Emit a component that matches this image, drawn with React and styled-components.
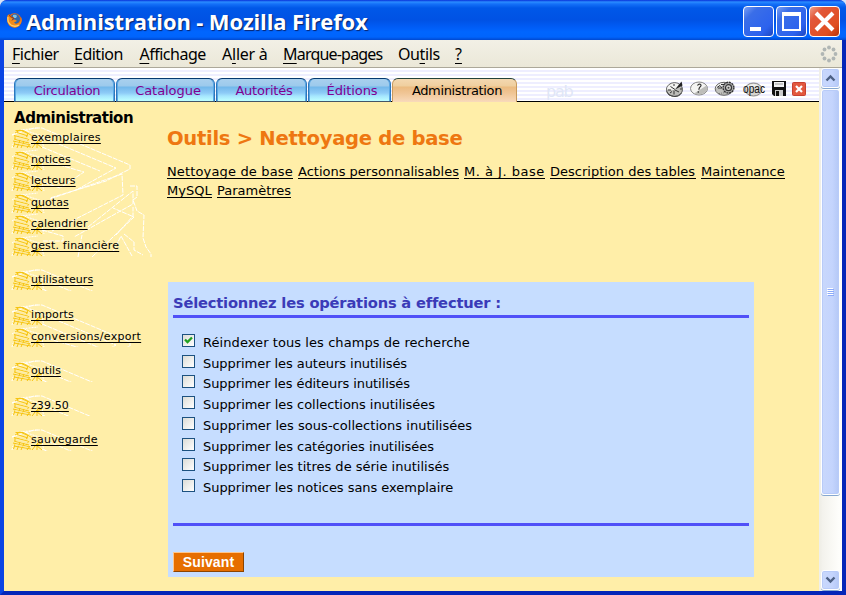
import React from "react";
import styled, { createGlobalStyle, css } from "styled-components";

const Global = createGlobalStyle`
  * { box-sizing: border-box; }
  body { margin: 0; overflow: hidden; background: #d8e4f8; }
`;

const verdana = `Verdana, "DejaVu Sans", sans-serif`;

const Window = styled.div`
  width: 846px;
  height: 595px;
  display: flex;
  flex-direction: column;
  overflow: hidden;
  background: #0a3ed8;
  border-radius: 7px 7px 0 0;
  font-family: ${verdana};
  color: #000;
`;

const TitleBar = styled.header`
  height: 40px;
  flex: none;
  display: flex;
  align-items: center;
  padding: 3px 6px 0 6px;
  border-radius: 7px 7px 0 0;
  background: linear-gradient(#0831d9 0, #2a8cff 2px, #1470f8 4px, #0058e8 8px, #0052e4 20px, #005cf6 27px, #0066ff 32px, #0064fc 37px, #0048d0 40px);
  > svg { margin-top: -3px; }
`;

const Title = styled.h1`
  flex: 1;
  margin: -1px 0 0 3px;
  font: bold 22px/30px "Trebuchet MS", "Open Sans", sans-serif;
  letter-spacing: -0.14px;
  color: #fff;
  white-space: nowrap;
  text-shadow: 1px 1px 1px #0a246a;
`;

const Controls = styled.div`
  display: flex;
  gap: 2px;
`;

const Control = styled.button`
  width: 31px;
  height: 31px;
  padding: 0;
  border: 1px solid #fff;
  border-radius: 4px;
  background: ${(p) =>
    p.$close
      ? "linear-gradient(135deg, #f0a08a 0, #e2583a 25%, #e04e20 75%, #b83208 100%)"
      : "linear-gradient(135deg, #7a9ff4 0, #3a6ee8 25%, #2c62ee 75%, #1c46c0 100%)"};
  svg { display: block; }
`;

const Frame = styled.div`
  flex: 1;
  min-height: 0;
  display: flex;
  flex-direction: column;
  border: solid #0a3ae0;
  border-width: 0 4px 4px;
  border-color: #0a3ae0 #0526b8 #0526b8 #0a44e4;
  background: #fff;
`;

const MenuBar = styled.nav`
  height: 28px;
  flex: none;
  display: flex;
  align-items: center;
  padding: 0 4px 0 8px;
  background: linear-gradient(#f2f0e6, #ebe8d8);
  border-bottom: 1px solid #aca899;
  font: 16px/26px Tahoma, "Noto Sans", sans-serif;
`;

const MenuItem = styled.span`
  width: ${(p) => p.$w}px;
  white-space: nowrap;
  letter-spacing: ${(p) => p.$ls}px;
  u { text-underline-offset: 3px; text-decoration-thickness: 1px; }
`;

const Spacer = styled.span`
  flex: 1;
`;

const Body = styled.div`
  flex: 1;
  min-height: 0;
  display: flex;
`;

const Page = styled.div`
  width: 815px;
  background: #ffeea8;
`;

const Header = styled.div`
  height: 34px;
  display: flex;
  align-items: flex-end;
  border-bottom: 1px solid #000;
  background: repeating-linear-gradient(#fff 0, #fff 2px, #eeeeff 2px, #eeeeff 4px);
`;

const Tabs = styled.div`
  display: flex;
  margin: 0 0 -1px 10px;
`;

const Tab = styled.a`
  width: ${(p) => p.$w}px;
  height: 24px;
  margin-right: 1px;
  padding-left: 5px;
  border-radius: 6px 6px 0 0;
  text-align: center;
  font-size: 13px;
  line-height: 23px;
  letter-spacing: ${(p) => p.$ls}px;
  white-space: nowrap;
  ${(p) =>
    p.$active
      ? css`
          color: #000;
          border: 1px solid #c89a5c;
          border-top-color: #24433c;
          border-bottom: 0;
          background: linear-gradient(#f4d8b0 0, #efcf9f 7px, #ebbb80 8px, #f0c595 14px, #f8dabb 23px);
        `
      : css`
          color: #800090;
          border: 1px solid #2c78bc;
          border-top-color: #063a70;
          border-bottom: 1px solid #456;
          box-shadow: inset 1px 0 #5ba8e4, inset -1px 0 #5ba8e4;
          background: linear-gradient(#a9d0ee 0, #9ccaec 7px, #72b7ea 8px, #8ecbf7 14px, #a5e6fe 17px, #beffff 22px);
        `}
`;

const Watermark = styled.span`
  flex: 1;
  padding-left: 28px;
  font: 16px/18px ${verdana};
  letter-spacing: -1.2px;
  color: #e0e6f6;
`;

const Tools = styled.div`
  display: flex;
  align-items: center;
  height: 25px;
  padding-right: 13px;
  svg { display: block; }
`;

const Columns = styled.div`
  display: flex;
`;

const Sidebar = styled.aside`
  width: 164px;
  padding: 7px 0 0 8px;
  flex: none;
`;

const SideTitle = styled.h2`
  margin: 0 0 1px 2px;
  font-size: 15px;
  line-height: 18px;
  letter-spacing: -0.48px;
`;

const Group = styled.ul`
  position: relative;
  width: 148px;
  margin: 0 0 12.9px;
  padding: 0;
  list-style: none;
`;

const Lines = styled.svg`
  position: absolute;
  left: 0;
  top: -1px;
  width: 100%;
  height: 100%;
  overflow: hidden;
`;

const SideItem = styled.li`
  position: relative;
  height: 21.6px;
  display: flex;
  svg { flex: none; width: 19px; height: 22px; margin-top: -1px; overflow: visible; }
`;

const SideLink = styled.a`
  font-size: 11px;
  line-height: 20px;
  letter-spacing: ${(p) => p.$ls}px;
  white-space: nowrap;
  text-decoration: underline;
  text-decoration-skip-ink: none;
  text-underline-offset: 2px;
  text-decoration-thickness: 1px;
`;

const Main = styled.main`
  width: 640px;
  padding: 25px 0 0 0;
  margin-left: -1px;
`;

const Heading = styled.h2`
  margin: 0 0 12px;
  font-size: 19.6px;
  line-height: 24px;
  letter-spacing: -0.31px;
  color: #ee7711;
  white-space: nowrap;
`;

const LinkRow = styled.div`
  display: flex;
  height: 19px;
  gap: 5px;
  font-size: 13px;
  line-height: 18px;
`;

const TopLink = styled.a`
  width: ${(p) => p.$w}px;
  height: 16px;
  border-bottom: 1px solid #000;
  letter-spacing: ${(p) => p.$ls}px;
  white-space: nowrap;
`;

const Panel = styled.section`
  width: 586px;
  height: 295px;
  margin: 81px 0 0 1px;
  padding: 10px 5px 0;
  background: #c6ddff;
`;

const PanelTitle = styled.h3`
  margin: 0;
  height: 26px;
  border-bottom: 3px solid #5050f8;
  font-size: 14.7px;
  line-height: 22px;
  letter-spacing: -0.2px;
  color: #3b3bb8;
  white-space: nowrap;
`;

const Options = styled.div`
  height: 208px;
  padding: 14px 0 0 9px;
  border-bottom: 3px solid #5050f8;
`;

const Option = styled.label`
  display: flex;
  height: 20.72px;
  font-size: 13px;
  line-height: 21px;
  letter-spacing: ${(p) => p.$ls}px;
  white-space: nowrap;
`;

const Box = styled.span`
  width: 13px;
  height: 13px;
  margin: 2px 8px 0 0;
  border: 1px solid #1c5180;
  background: linear-gradient(135deg, #dcdcd7, #fff);
  svg { display: block; }
`;

const Submit = styled.button`
  display: block;
  width: 71px;
  height: 20px;
  margin: 26px 0 0 0;
  padding: 0;
  border: 1px solid;
  border-color: #ffc68c #8c4400 #8c4400 #ffc68c;
  background: #e66e00;
  color: #fff;
  font: bold 14px/18px Arial, "Liberation Sans", sans-serif;
  letter-spacing: 0.15px;
`;

const Scrollbar = styled.div`
  width: 23px;
  display: flex;
  flex-direction: column;
  padding: 0 2px 1px 2px;
  background: linear-gradient(90deg, #f0efe8 2px, #f3f2ec 3px, #fefefb 20px);
`;

const ScrollPart = styled.div`
  width: 19px;
  height: ${(p) => p.$h}px;
  display: flex;
  align-items: center;
  justify-content: center;
  border: 1px solid #fff;
  border-radius: 3px;
  background: linear-gradient(90deg, #c9d8fc, #c4d4fd 60%, #b4c8f6);
  box-shadow: inset 0 0 0 1px #b8cbf8, 0 1px 0 #86a8d0;
`;

const ScrollGap = styled.div`
  height: 1px;
`;

const Track = styled.div`
  flex: 1;
`;

const Firefox = () => (
  <svg width="17" height="17" viewBox="0 0 17 17">
    <circle cx="8.5" cy="8.5" r="7.2" fill="#e76b12" />
    <circle cx="9" cy="7" r="5" fill="#2c67b0" />
    <path d="M7 3q3-1 4 1l-1 2-3 0z" fill="#7cc4e8" />
    <path d="M1.5 3.5Q0 9 3 13q5 4.500 10 1 4-4 2-9 .5 4-2 6-3 2-5-.5l3-1.500-2-1.500-3 .2L7 5 4 4.500 3.500 2z" fill="#f08a1c" />
    <path d="M2 5q-1 5 3 8 4 2.500 8 0" fill="none" stroke="#fcd070" strokeWidth="1.300" />
    <path d="M3 2.500l1.500 2.500L8 6 6 8.500" fill="none" stroke="#a83c08" />
  </svg>
);

const Throbber = () => (
  <svg width="18" height="18" viewBox="0 0 18 18" fill="#b0b6b4">
    {[[9, 2.5], [13.5, 4.5], [15.5, 9], [13.5, 13.5], [9, 15.5], [4.5, 13.5], [2.5, 9], [4.5, 4.5]].map(([x, y]) => (
      <circle key={`${x}-${y}`} cx={x} cy={y} r="1.900" />
    ))}
  </svg>
);

const Books = () => (
  <svg viewBox="0 0 19 22" fill="none">
    <path d="M0 8L8 3 26 1M0 21l1-4M12 3l18 6M30 14l2 7" stroke="#fff" strokeDasharray="2 1" />
    <path d="M3.500 3.500h8l8 5M3 6l5-3 8 3.500M5 5.500l11 3.500M2 8.500L16 12M2 12l15 4M3 9v3M1 14l17 4M2 17l17 3M1.500 20l2-6M8 13l-3 8M12 14l-3 7M20 21l4-5 6-2M22 18l6-6M25 15v6M24 16l6 5M16 6l-2 5M17 12l-3 4M18 17l-3 4" stroke="#f6c412" />
    <path d="M5 8l11 3M4 11.500l12 3M3 15.500l13 3" stroke="#fbe9a0" strokeWidth="1.200" />
  </svg>
);

const Building = () => (
  <Lines fill="none" stroke="#fff" strokeWidth="1" strokeDasharray="5 1">
    <path d="M0 8L22 1 30 1 118 38 118 42 94 54 38 71M30 10L104 41 66 62M30 20L88 44M30 33L72 45 48 61 30 55M38 72L110 47 111 68 40 104M76 100L121 64 121 77 62 110M66 130l4-22M80 130L122 90 101 81M104 108l17-19v-9M30 103l21 6v5H30M118 59h7v11l-4 3 4 11 7 4-1 23 3 9 5 7v7M112 107l10 8v8l9 5M101 125l8-16 11 20" />
  </Lines>
);

const Clock = () => (
  <svg width="20" height="19" viewBox="0 0 20 19">
    <ellipse cx="9.500" cy="10.500" rx="8" ry="6.800" fill="#bcbcb8" stroke="#555" />
    <path d="M2 10.500a7.500 6 0 0 1 12-5l-4 5.500z" fill="#f2f2f0" />
    <path d="M10 10.500l6.500-8 1 4z" fill="#222" />
    <path d="M10 10.500L5.500 7.500M10 11l4 2M9 11.500v4M3 11h3M9 5v2M5 14l2-1.500M15 10h2" stroke="#333" />
    <path d="M1.500 12.500q1.500 4.500 7 5t8-3.500" fill="none" stroke="#444" />
  </svg>
);

const Help = () => (
  <svg width="20" height="19" viewBox="0 0 20 19">
    <ellipse cx="10" cy="9.500" rx="8.500" ry="6.500" fill="#f4f4f2" stroke="#888" />
    <path d="M5 14.500L17.500 6.500q2.500 5-3 8-5 2-9.500 0z" fill="#bdbdba" />
    <path d="M8.500 6.500q1-1.800 2.800-1.200 1.800 1.200-.8 3.200l-.8 2.200M9.300 12.200v1.500" fill="none" stroke="#333" strokeWidth="1.200" />
  </svg>
);

const Gear = () => (
  <svg width="22" height="19" viewBox="0 0 22 19">
    <ellipse cx="10" cy="9.800" rx="8.800" ry="6.500" fill="#c0c0bc" stroke="#666" />
    <path d="M2 9a8 5 0 0 1 9-5v4z" fill="#f0f0ee" />
    <path d="M3 8.500l3-2 2 2.500H4M7 5.500h3" stroke="#333" fill="none" />
    <circle cx="14.500" cy="8.700" r="5.400" fill="#aaa" stroke="#333" strokeWidth="1.400" strokeDasharray="2 .8" />
    <circle cx="14.500" cy="8.700" r="3" fill="#d8d8d4" stroke="#333" strokeWidth="1.200" />
    <circle cx="14.500" cy="8.700" r="1" fill="#444" />
    <path d="M5 14.500l7-1" stroke="#777" strokeDasharray="1 1" />
  </svg>
);

const Opac = () => (
  <svg width="28" height="22" viewBox="0 0 28 22">
    <ellipse cx="13.500" cy="11.500" rx="8.500" ry="6.500" fill="#d4d4d0" stroke="#888" />
    <path d="M6 11a7.500 6 0 0 1 13-3z" fill="#f0f0ee" />
    <text x="3" y="15" fontSize="12" fontFamily="Liberation Sans" fill="#111" textLength="22" lengthAdjust="spacingAndGlyphs">opac</text>
  </svg>
);

const Floppy = () => (
  <svg width="14" height="15" viewBox="0 0 14 15">
    <path d="M0 0h14v15H2l-2-2z" fill="#111" />
    <path d="M2 1h10v5H2z" fill="#f2f2f2" />
    <path d="M3 3h8" stroke="#999" />
    <path d="M3 9h8v6H3z" fill="#ccc" />
    <path d="M4 10h3v5H4z" fill="#111" />
  </svg>
);

const Exit = () => (
  <svg width="14" height="14" viewBox="0 0 14 14">
    <rect x=".5" y=".5" width="13" height="13" rx="1" fill="#e2583e" stroke="#c84030" />
    <path d="M4 4l6 6M10 4l-6 6" stroke="#fff" strokeWidth="2.200" />
  </svg>
);

const Gap = styled.span`
  width: ${(p) => p.$w}px;
`;

const menus = [
  ["", "F", "ichier", 62, -0.45], ["", "E", "dition", 65.5, -0.5], ["", "A", "ffichage", 82.5, -0.5],
  ["A", "l", "ler à", 61, -0.25], ["", "M", "arque-pages", 115, -0.8], ["Ou", "t", "ils", 57, -0.4], ["", "?", "", 12, 0],
];
const tabs = [["Circulation", 101, -0.27], ["Catalogue", 99, -0.05], ["Autorités", 91, -0.2], ["Éditions", 83, -0.1], ["Administration", 125, -0.35]];
const groups = [
  [["exemplaires", 0.27], ["notices", 0], ["lecteurs", 0.06], ["quotas", 0.05], ["calendrier", 0.12], ["gest. financière", 0.18]],
  [["utilisateurs", 0.08]], [["imports", 0.12], ["conversions/export", 0.28]], [["outils", 0]], [["z39.50", 0.1]], [["sauvegarde", 0.23]],
];
const links = [
  [["Nettoyage de base", 126, 0.15], ["Actions personnalisables", 161, 0], ["M. à J. base", 81, 0.5], ["Description des tables", 146, 0], ["Maintenance", 84, 0]],
  [["MySQL", 45, 0], ["Paramètres", 74, 0]],
];
const options = [
  ["Réindexer tous les champs de recherche", 0.07], ["Supprimer les auteurs inutilisés", -0.06], ["Supprimer les éditeurs inutilisés", -0.08],
  ["Supprimer les collections inutilisées", -0.04], ["Supprimer les sous-collections inutilisées", 0.03], ["Supprimer les catégories inutilisées", -0.04],
  ["Supprimer les titres de série inutilisés", 0], ["Supprimer les notices sans exemplaire", -0.04],
];

export default function App() {
  return (
    <>
      <Global />
      <Window>
        <TitleBar>
          <Firefox />
          <Title>Administration - Mozilla Firefox</Title>
          <Controls>
            <Control aria-label="Réduire"><svg width="29" height="29"><path d="M6 20h11v4H6z" fill="#fff" /></svg></Control>
            <Control aria-label="Agrandir">
              <svg width="29" height="29"><path d="M5 5h19v19H5zM7 9v13h15V9z" fill="#fff" fillRule="evenodd" /></svg>
            </Control>
            <Control $close aria-label="Fermer">
              <svg width="29" height="29"><path d="M6 6l17 17M23 6L6 23" stroke="#fff" strokeWidth="4" /></svg>
            </Control>
          </Controls>
        </TitleBar>
        <Frame>
          <MenuBar>
            {menus.map(([a, k, b, w, ls]) => (
              <MenuItem key={k + b} $w={w} $ls={ls}>{a}<u>{k}</u>{b}</MenuItem>
            ))}
            <Spacer />
            <Throbber />
          </MenuBar>
          <Body>
            <Page>
              <Header>
                <Tabs>
                  {tabs.map(([t, w, ls], i) => (
                    <Tab key={t} $w={w} $ls={ls} $active={i === 4}>{t}</Tab>
                  ))}
                </Tabs>
                <Watermark>pab</Watermark>
                <Tools>
                  <Clock /><Gap $w={4} /><Help /><Gap $w={5} /><Gear /><Gap $w={4} /><Opac /><Gap $w={4} /><Floppy /><Gap $w={6} /><Exit />
                </Tools>
              </Header>
              <Columns>
                <Sidebar>
                  <SideTitle>Administration</SideTitle>
                  {groups.map((g) => (
                    <Group key={g[0][0]}>
                      <Building />
                      {g.map(([t, ls]) => (
                        <SideItem key={t}><Books /><SideLink $ls={ls}>{t}</SideLink></SideItem>
                      ))}
                    </Group>
                  ))}
                </Sidebar>
                <Main>
                  <Heading>Outils &gt; Nettoyage de base</Heading>
                  {links.map((row) => (
                    <LinkRow key={row[0][0]}>
                      {row.map(([t, w, ls]) => <TopLink key={t} $w={w} $ls={ls}>{t}</TopLink>)}
                    </LinkRow>
                  ))}
                  <Panel>
                    <PanelTitle>Sélectionnez les opérations à effectuer :</PanelTitle>
                    <Options>
                      {options.map(([t, ls], i) => (
                        <Option key={t} $ls={ls}>
                          <Box>
                            {i === 0 && (
                              <svg width="11" height="11"><path d="M2 4.500l2.500 2.500L9 2.500" fill="none" stroke="#21a121" strokeWidth="2.300" /></svg>
                            )}
                          </Box>
                          {t}
                        </Option>
                      ))}
                    </Options>
                    <Submit>Suivant</Submit>
                  </Panel>
                </Main>
              </Columns>
            </Page>
            <Scrollbar>
              <ScrollPart $h={20}>
                <svg width="11" height="8"><path d="M1.500 6.500l4-4 4 4" fill="none" stroke="#4d6185" strokeWidth="2.400" /></svg>
              </ScrollPart>
              <ScrollGap />
              <ScrollPart $h={406}>
                <svg width="8" height="8"><path d="M0 .5h6M0 2.500h6M0 4.500h6M0 6.500h6" stroke="#fff" /><path d="M1 1.500h6M1 3.500h6M1 5.500h6M1 7.500h6" stroke="#8caafa" /></svg>
              </ScrollPart>
              <Track />
              <ScrollPart $h={20}>
                <svg width="11" height="8"><path d="M1.500 1.500l4 4 4-4" fill="none" stroke="#4d6185" strokeWidth="2.400" /></svg>
              </ScrollPart>
            </Scrollbar>
          </Body>
        </Frame>
      </Window>
    </>
  );
}
